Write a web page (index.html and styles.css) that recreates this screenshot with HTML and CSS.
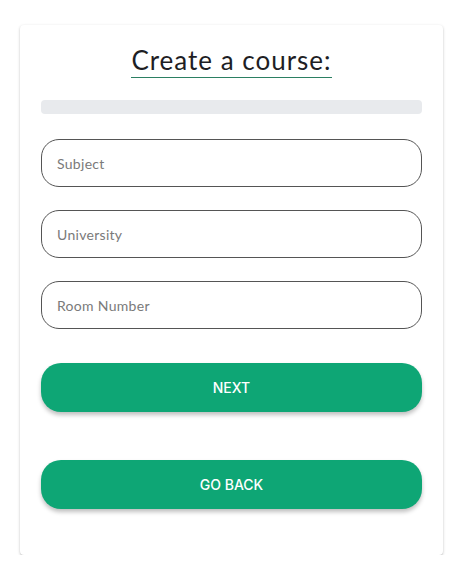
FILE: index.html
```html
<!DOCTYPE html>
<html>
<head>
<meta charset="utf-8">
<link rel="stylesheet" href="styles.css">
</head>
<body>
<div class="card">
  <div class="title-wrap"><h1 class="title">Create a course:</h1></div>
  <div class="progress"></div>
  <form class="form">
    <input class="field" type="text" placeholder="Subject">
    <input class="field" type="text" placeholder="University">
    <input class="field" type="text" placeholder="Room Number">
    <button type="button" class="btn btn-next">NEXT</button>
    <button type="button" class="btn btn-back">GO BACK</button>
  </form>
</div>
</body>
</html>
```
FILE: styles.css
```css
html, body {
  margin: 0;
  padding: 0;
  background: #fff;
}
body {
  font-family: "Lato", "Open Sans", sans-serif;
}
.card {
  box-sizing: border-box;
  width: 423px;
  margin: 25px 0 0 20px;
  height: 530px;
  padding: 20px 21px 0 21px;
  background: #fff;
  border-radius: 4px;
  box-shadow: 0 1px 3px rgba(0,0,0,0.22), 0 1px 1px rgba(0,0,0,0.08);
}
.title-wrap {
  display: flex;
  justify-content: center;
}
.title {
  margin: 0;
  font-size: 26px;
  font-weight: 400;
  line-height: 30px;
  color: #1e1e24;
  border-bottom: 1px solid #2b7f62;
  padding-bottom: 2px;
  letter-spacing: 1px;
}
.progress {
  margin-top: 22px;
  height: 14px;
  background: #e8eaed;
  border-radius: 4px;
}
.form {
  display: flex;
  flex-direction: column;
  margin-top: 25px;
}
.field {
  box-sizing: border-box;
  height: 48px;
  border: 1px solid #555;
  border-radius: 18px;
  padding: 0 15px;
  font-family: inherit;
  font-size: 14px;
  color: #333;
  background: #fff;
  outline: none;
  margin-bottom: 23px;
}
.field::placeholder {
  color: #7a7a7a;
  letter-spacing: 0.3px;
}
.field:nth-of-type(3) {
  margin-bottom: 34px;
}
.btn {
  height: 49px;
  border: none;
  border-radius: 20px;
  background: #0ea675;
  color: #fff;
  font-family: "Inter", "Roboto", sans-serif;
  font-size: 14px;
  font-weight: 500;
  box-shadow: 0 3px 4px rgba(0,0,0,0.25);
}
.btn-next {
  margin-bottom: 48px;
}
```
